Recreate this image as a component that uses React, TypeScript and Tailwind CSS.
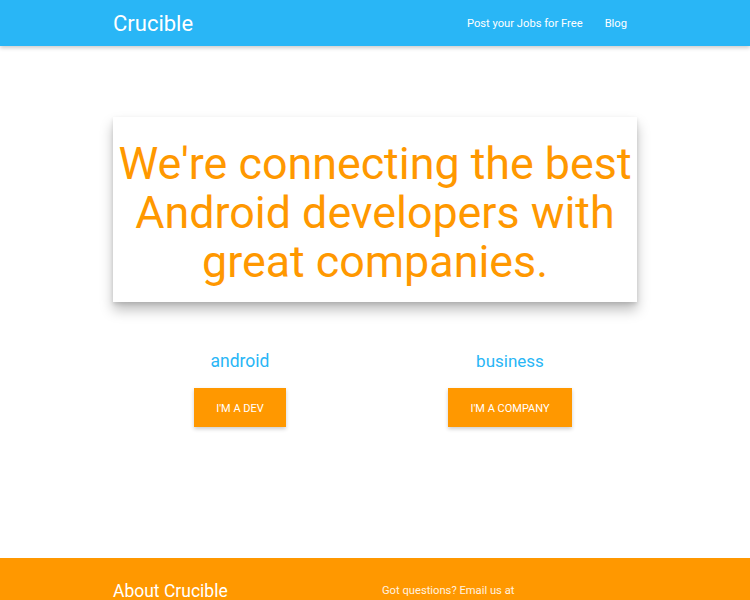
import React from "react";

const App: React.FC = () => {
  return (
    <div className="min-h-[600px] bg-white font-['Roboto',sans-serif] flex flex-col">
      {/* nav */}
      <nav className="h-[46px] bg-[#29b6f6] shadow-[0_2px_4px_rgba(0,0,0,0.2)] relative z-10">
        <div className="w-[524px] mx-auto h-full flex items-center justify-between pt-[2px]">
          <a className="text-white text-[22px] leading-none">Crucible</a>
          <ul className="flex items-center gap-[22px] text-white text-[11.2px] pr-[10px]">
            <li>Post your Jobs for Free</li>
            <li>Blog</li>
          </ul>
        </div>
      </nav>

      <main className="flex-1">
        <div className="w-[524px] mx-auto pt-[71px]">
          <div className="bg-white h-[185px] flex items-center justify-center shadow-[0_8px_12px_rgba(0,0,0,0.25),0_2px_4px_rgba(0,0,0,0.12)]">
            <h1 className="text-[#ff9800] text-[44.8px] leading-[49px] text-center font-normal pt-[5px]">
              We're connecting the best
              <br />
              Android developers with
              <br />
              great companies.
            </h1>
          </div>
        </div>

        <div className="w-[540px] mx-auto grid grid-cols-2 mt-[47px]">
          <div className="flex flex-col items-center">
            <h5 className="text-[#29b6f6] text-[17.5px] leading-[24px]">android</h5>
            <button className="mt-[15px] h-[39px] px-[22px] pt-[3px] bg-[#ff9800] text-white text-[11px] uppercase shadow-[0_2px_4px_rgba(0,0,0,0.2)]">
              I'm a dev
            </button>
          </div>
          <div className="flex flex-col items-center">
            <h5 className="text-[#29b6f6] text-[17px] leading-[24px]">business</h5>
            <button className="mt-[15px] h-[39px] px-[22px] pt-[3px] bg-[#ff9800] text-white text-[11px] uppercase shadow-[0_2px_4px_rgba(0,0,0,0.2)]">
              I'm a company
            </button>
          </div>
        </div>
      </main>

      <footer className="bg-[#ff9800] h-[42px] mt-auto">
        <div className="w-[524px] mx-auto flex pt-[22px]">
          <h5 className="w-[269px] text-white text-[17.5px] leading-[22px]">About Crucible</h5>
          <p className="text-[#fff3e0] text-[11.2px] leading-[22px]">Got questions? Email us at</p>
        </div>
      </footer>
    </div>
  );
};

export default App;
